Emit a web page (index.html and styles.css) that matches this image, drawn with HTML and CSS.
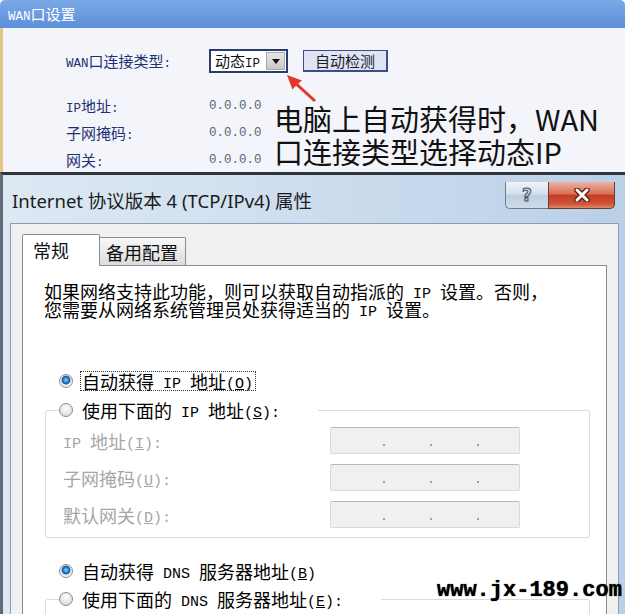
FILE: index.html
```html
<!DOCTYPE html>
<html lang="zh-CN">
<head>
<meta charset="utf-8">
<title>WAN口设置</title>
<link rel="stylesheet" href="styles.css">
</head>
<body>
<div class="page">
  <section class="wan">
    <header class="wan-head"><span class="m">WAN</span>口设置</header>
    <div class="wan-body">
      <div class="row type-row">
        <span class="lbl"><span class="m">WAN</span>口连接类型<span class="m">:</span></span>
        <div class="ctrls">
          <div class="select">
            <span class="sel-text">动态<span class="m">IP</span></span>
            <span class="sel-btn"><svg width="8" height="5" viewBox="0 0 8 5"><path d="M0 0h8L4 5z" fill="#111"/></svg></span>
          </div>
          <button class="detect" type="button">自动检测</button>
        </div>
      </div>
      <div class="row"><span class="lbl"><span class="m">IP</span>地址<span class="m">:</span></span><span class="val">0.0.0.0</span></div>
      <div class="row"><span class="lbl">子网掩码<span class="m">:</span></span><span class="val">0.0.0.0</span></div>
      <div class="row"><span class="lbl">网关<span class="m">:</span></span><span class="val">0.0.0.0</span></div>
    </div>
    <p class="note">电脑上自动获得时，WAN<br>口连接类型选择动态IP</p>
    <svg class="arrow" width="40" height="40" viewBox="0 0 40 40">
      <path d="M7 5 L22 10.4 L18.2 13.7 L36 30 L34 32 L16 15.8 L12.4 19.6 Z" fill="#e3372c"/>
    </svg>
  </section>

  <section class="dlg">
    <div class="titlebar">
      <h1 class="title">Internet 协议版本 4 (TCP/IPv4) 属性</h1>
      <div class="caps">
        <span class="cap help">?</span>
        <span class="cap close">
          <svg width="18" height="14" viewBox="0 0 18 14">
            <path d="M4 2 L14 12 M14 2 L4 12" stroke="#5a1d14" stroke-width="5.5" stroke-linecap="round"/>
            <path d="M4 2 L14 12 M14 2 L4 12" stroke="#fff" stroke-width="3" stroke-linecap="round"/>
          </svg>
        </span>
      </div>
    </div>
    <div class="client">
      <div class="tabs">
        <span class="tab active">常规</span>
        <span class="tab">备用配置</span>
      </div>
      <div class="panel">
        <p class="intro">如果网络支持此功能，则可以获取自动指派的<span class="m"> IP </span>设置。否则，<br>您需要从网络系统管理员处获得适当的<span class="m"> IP </span>设置。</p>

        <div class="opt first"><span class="radio on"></span><span class="focus">自动获得<span class="m"> IP </span>地址<span class="m">(<u>O</u>)</span></span></div>

        <fieldset class="grp">
          <legend><span class="opt"><span class="radio"></span><span>使用下面的<span class="m"> IP </span>地址<span class="m">(<u>S</u>):</span></span></span></legend>
          <div class="field"><span class="flbl"><span class="m">IP </span>地址<span class="m">(<u>I</u>):</span></span><span class="ipbox"><i></i><i></i><i></i></span></div>
          <div class="field"><span class="flbl">子网掩码<span class="m">(<u>U</u>):</span></span><span class="ipbox"><i></i><i></i><i></i></span></div>
          <div class="field"><span class="flbl">默认网关<span class="m">(<u>D</u>):</span></span><span class="ipbox"><i></i><i></i><i></i></span></div>
        </fieldset>

        <div class="opt dns1"><span class="radio on"></span><span>自动获得<span class="m"> DNS </span>服务器地址<span class="m">(<u>B</u>)</span></span></div>

        <fieldset class="grp dns">
          <legend><span class="opt"><span class="radio"></span><span>使用下面的<span class="m"> DNS </span>服务器地址<span class="m">(<u>E</u>):</span></span></span></legend>
          <div class="field"><span class="flbl">首选<span class="m"> DNS </span>服务器<span class="m">(<u>P</u>):</span></span><span class="ipbox"><i></i><i></i><i></i></span></div>
        </fieldset>
      </div>
    </div>
  </section>

  <div class="watermark">www.jx-189.com</div>
</div>
</body>
</html>
```

FILE: styles.css
```css
* { box-sizing: border-box; margin: 0; padding: 0; }
html, body { width: 625px; height: 614px; overflow: hidden; background: #fff; }
body { font-family: "Noto Sans CJK SC", sans-serif; }
.page { position: relative; width: 625px; height: 614px; overflow: hidden; }
.m { font-family: "Liberation Mono", monospace; line-height: 0; }

/* ---------- WAN settings panel ---------- */
.wan { position: relative; height: 172px; overflow: hidden; }
.wan-head {
  height: 28px; line-height: 28px; padding-left: 8px;
  color: #fff; font-size: 15px;
  background: linear-gradient(#7aa8e6, #5d90da);
  border-radius: 5px 5px 0 0;
}
.wan-head .m { font-size: 12.5px; }
.wan-body {
  height: 144px; background: #f3f5fa;
  border-left: 3px solid #e5c686;
  padding: 21px 0 0 63px;
  display: flex; flex-direction: column;
  font-size: 15px; color: #1f3175;
}
.row { display: flex; align-items: center; height: 27px; flex: none; }
.row.type-row { height: 24px; margin-bottom: 19px; }
.lbl { width: 143px; line-height: 20px; }
.lbl .m { font-size: 12.5px; }
.val { font-family: "Liberation Mono", monospace; font-size: 12.5px; color: #5b6478; }
.ctrls { display: flex; align-items: center; gap: 15px; }
.select {
  width: 79px; height: 24px; border: 2px solid #2c3b6d; background: #fff;
  display: flex; align-items: center; justify-content: space-between;
  padding: 0 1px 0 4px; color: #111; line-height: 18px;
}
.select .m { font-size: 12.5px; }
.sel-btn {
  width: 19px; height: 18px; background: linear-gradient(#e6e6e6, #c8c8c8);
  border: 1px solid #a9a9a9; display: flex; align-items: center; justify-content: center;
}
.detect {
  width: 85px; height: 22px; background: #dfe3f6;
  border: 1px solid #3d4d8a; border-right-width: 2px; border-bottom-width: 2px;
  font-family: "Noto Sans CJK SC", sans-serif; font-size: 15px; line-height: 18px; color: #1d1d1d;
}
.note {
  position: absolute; left: 274px; top: 102px;
  font-size: 29px; line-height: 33px; color: #111; white-space: nowrap;
}
.arrow { position: absolute; left: 280px; top: 70px; }

/* ---------- dialog ---------- */
.dlg {
  height: 442px; display: flex; flex-direction: column;
  border-top: 3px solid #30353b; border-left: 3px solid #5f6b78;
  background: linear-gradient(to right, #dde8f3 0%, #cfdeef 45%, #bad0e7 100%);
}
.titlebar { height: 48px; display: flex; justify-content: space-between; flex: none; }
.title {
  font-family: "Noto Sans", "Noto Sans CJK SC", sans-serif; font-weight: 400;
  font-size: 18.5px; line-height: 22px; padding: 15px 0 0 9px; color: #1b1b1b;
  white-space: nowrap;
}
.caps { display: flex; margin: 7px 10px 0 0; height: 27px; }
.cap { height: 27px; display: flex; align-items: center; justify-content: center; }
.help {
  width: 43px; border: 1px solid #6c7d93; border-top: none; border-right: none;
  border-radius: 0 0 0 5px;
  background: linear-gradient(#eef3f9, #d6e1ed 45%, #bfcfe2 52%, #cddcec);
  font-family: "DejaVu Sans", sans-serif; font-weight: bold; font-size: 17px; color: #cfd9e6;
  -webkit-text-stroke: 1px #3f4c5c;
}
.close {
  width: 67px; border: 1px solid #6a3a33; border-top: none;
  border-radius: 0 0 5px 0;
  background: linear-gradient(#eab3a3, #d97058 45%, #c33b22 52%, #cf5539 85%, #e4886a);
}
.client {
  flex: 1; margin: 0 6px 0 7px; border: 1px solid #8b9db3; border-bottom: none;
  background: #f0f0f0; padding: 10px 0 0 11px;
  display: flex; flex-direction: column;
}
.tabs { display: flex; align-items: flex-end; height: 31px; flex: none; }
.tab {
  height: 28px; width: 86px; padding-left: 6px;
  border: 1px solid #898c95; border-bottom: none; border-left: none;
  background: linear-gradient(#f7f7f7, #dcdcdc);
  font-size: 18px; line-height: 28px; color: #111;
  border-radius: 0 2px 0 0;
}
.tab.active {
  width: 78px; height: 32px; margin-bottom: -1px; padding-left: 10px;
  border-left: 1px solid #898c95; background: #fff; line-height: 31px;
  position: relative; z-index: 1; border-radius: 2px 2px 0 0;
}
.panel {
  width: 585px; height: 400px; flex: none;
  border: 1px solid #898c95; background: #fff;
  font-size: 18px; color: #000;
}
.panel .m { font-size: 15px; vertical-align: 1px; }
.intro { padding: 16px 0 0 21px; line-height: 18px; white-space: nowrap; }
.opt { display: flex; align-items: center; gap: 7px; height: 20px; line-height: 20px; white-space: nowrap; }
.opt.first { margin: 53px 0 0 36px; }
.opt.dns1 { margin: 23px 0 0 36px; gap: 9px; }
.focus { border: 1px dotted #333; padding: 0 2px 0 1px; line-height: 18px; }
.radio {
  width: 14px; height: 14px; border-radius: 50%; flex: none;
  border: 1px solid #8e8e8e;
  background: radial-gradient(circle at 50% 35%, #fefefe, #dadada 80%);
}
.radio.on {
  background: radial-gradient(circle at 50% 42%, #9ed6ff 0, #2f7fcf 2.5px, #175a9e 4px, #dfe6ee 4.8px, #f6f6f6 7px);
}
.grp {
  margin: 9px 0 0 22px; width: 545px; padding: 0 0 9px 0;
  border: 1px solid #d3dce3; border-radius: 3px;
}
.grp legend { margin-left: 13px; padding-right: 38px; }
.grp legend .opt { gap: 9px; }
.grp.dns { margin-top: 8px; }
.field { display: flex; align-items: center; height: 27px; margin-top: 10px; color: #a6a6a6; }
.grp legend + .field { margin-top: 7px; }
.flbl { width: 284px; padding-left: 17px; white-space: nowrap; line-height: 20px; }
.ipbox {
  width: 190px; height: 27px; background: #f0f0f0;
  border: 1px solid #dadada; border-top-color: #b9b9b9; border-radius: 2px;
  display: flex; align-items: flex-end; gap: 45px; padding: 0 0 7px 52px;
}
.ipbox i { width: 2px; height: 2px; background: #a0a0a0; display: block; }

.watermark {
  position: absolute; left: 437px; top: 580px;
  font-family: "Liberation Mono", monospace; font-weight: bold;
  font-size: 22px; line-height: 22px; color: #000; white-space: nowrap;
  text-shadow: 0 0 1px #000;
}
```
